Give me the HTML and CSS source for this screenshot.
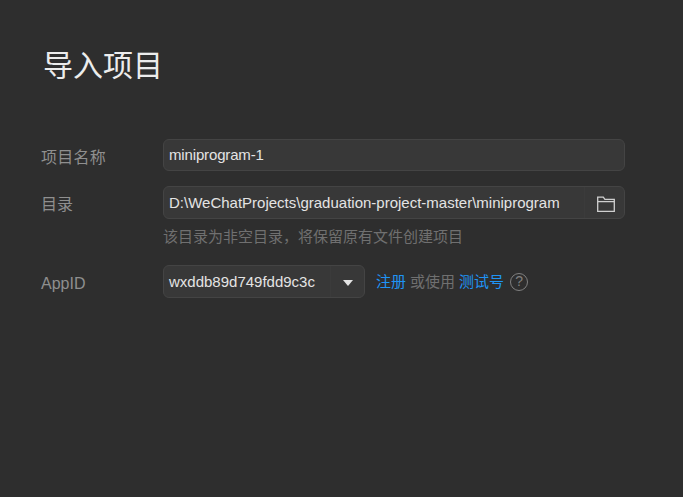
FILE: index.html
```html
<!DOCTYPE html>
<html lang="zh-CN">
<head>
<meta charset="utf-8">
<title>导入项目</title>
<link rel="stylesheet" href="styles.css">
</head>
<body>
<main class="page">
  <h1 class="title">导入项目</h1>
  <form class="form">
    <div class="row row-name">
      <label class="label label-name">项目名称</label>
      <div class="field field-wide"><span class="value value-name">miniprogram-1</span></div>
    </div>
    <div class="row row-dir">
      <label class="label">目录</label>
      <div class="field field-wide field-dir">
        <span class="value">D:\WeChatProjects\graduation-project-master\miniprogram</span>
        <span class="addon addon-folder">
          <svg class="icon-folder" width="18" height="16" viewBox="0 0 18 16" fill="none" stroke="#cfcfcf" stroke-width="1.3">
            <path d="M.7 15.3V1.2h5.6l1.6 2.2h9.4v11.9z"/>
            <path d="M.7 5.6h16.6"/>
          </svg>
        </span>
      </div>
    </div>
    <p class="hint">该目录为非空目录，将保留原有文件创建项目</p>
    <div class="row row-app">
      <label class="label">AppID</label>
      <div class="field field-select">
        <span class="value">wxddb89d749fdd9c3c</span>
        <span class="addon addon-caret"><span class="caret"></span></span>
      </div>
      <div class="links">
        <a class="link">注册</a>
        <span class="or">或使用</span>
        <a class="link">测试号</a>
        <span class="help">?</span>
      </div>
    </div>
  </form>
</main>
</body>
</html>
```
FILE: styles.css
```css
* { box-sizing: border-box; }
html, body { margin: 0; height: 100%; }
body {
  background: #2e2e2e;
  font-family: "Liberation Sans", "Noto Sans CJK SC", sans-serif;
  overflow: hidden;
}
.page { padding: 44px 58px 0 41px; }
.title {
  margin: 0 0 0 2px;
  font-size: 30px;
  line-height: 44px;
  font-weight: 400;
  color: #ececec;
}
.form { margin-top: 51px; }
.row { display: flex; align-items: center; }
.row-dir { margin-top: 15px; }
.row-app { margin-top: 17px; }
.label {
  width: 122px;
  flex: none;
  font-size: 16px;
  line-height: 24px;
  color: #8f8f8f;
  position: relative;
  top: 2px;
}
.label-name { top: 3px; letter-spacing: .25px; }
.field {
  display: flex;
  align-items: center;
  background: #383838;
  border: 1px solid #444;
  border-radius: 6px;
  padding-left: 5px;
  font-size: 15px;
  color: #e4e4e4;
}
.field-wide { flex: 1; height: 32px; }
.field-dir { height: 33px; }
.field-select { width: 202px; height: 33px; flex: none; }
.value { flex: 1; white-space: nowrap; }
.value-name { letter-spacing: -.15px; padding-bottom: 2px; }
.addon {
  display: flex;
  align-items: center;
  justify-content: center;
  align-self: stretch;
  border-left: 1px solid #3b3b3b;
}
.addon-folder { width: 40px; flex: none; padding-left: 2px; }
.icon-folder { display: block; margin-top: 3px; }
.addon-caret { width: 34px; flex: none; padding-left: 1px; }
.caret {
  width: 0;
  height: 0;
  border-left: 5px solid transparent;
  border-right: 5px solid transparent;
  border-top: 6px solid #e4e4e4;
  margin-top: 3px;
}
.hint {
  margin: 7px 0 0 122px;
  font-size: 15px;
  line-height: 22px;
  color: #707070;
}
.links {
  display: flex;
  align-items: center;
  gap: 4px;
  margin-left: 11px;
  font-size: 15px;
  line-height: 22px;
}
.link { color: #1f94f5; }
.or { color: #707070; }
.help {
  width: 18px;
  height: 18px;
  margin-left: 2px;
  border: 1.5px solid #808080;
  border-radius: 50%;
  color: #808080;
  font-size: 14px;
  line-height: 15px;
  text-align: center;
}
```
